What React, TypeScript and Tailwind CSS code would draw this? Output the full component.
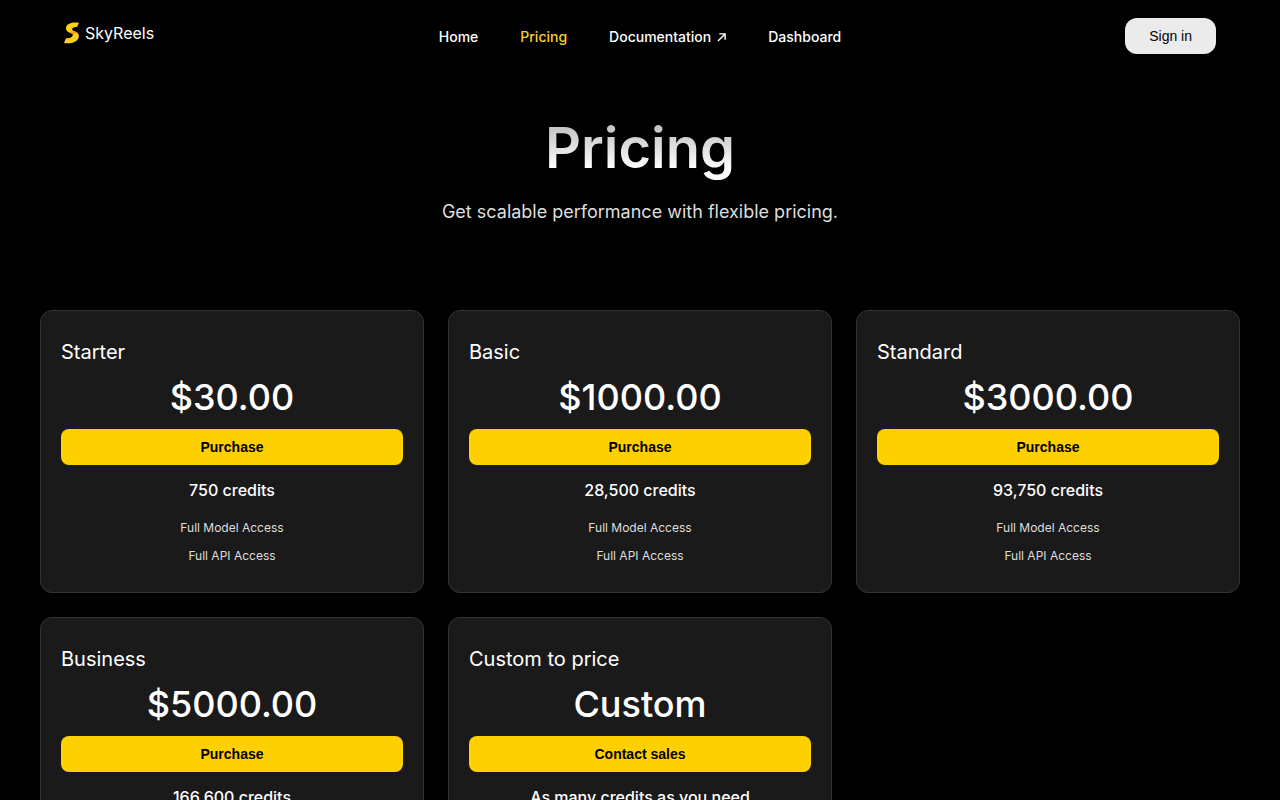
import React from "react";

interface Plan {
  name: string;
  price: string;
  action: string;
  credits: string;
}

const plans: Plan[] = [
  { name: "Starter", price: "$30.00", action: "Purchase", credits: "750 credits" },
  { name: "Basic", price: "$1000.00", action: "Purchase", credits: "28,500 credits" },
  { name: "Standard", price: "$3000.00", action: "Purchase", credits: "93,750 credits" },
  { name: "Business", price: "$5000.00", action: "Purchase", credits: "166,600 credits" },
  { name: "Custom to price", price: "Custom", action: "Contact sales", credits: "As many credits as you need" },
];

const features = ["Full Model Access", "Full API Access"];

function Logo() {
  return (
    <a href="#" className="flex items-center gap-1.5 pb-1.5 text-base text-white">
      <svg viewBox="0 0 15 22" className="h-[22px] w-[15px]" aria-hidden="true">
        <path
          d="M15 0.8C9 -0.4 3.300 1.200 2.200 5C1.200 8.800 4.200 10 7 11.200C9 12.100 9.300 13 8.300 14.300C7 16 4 16.600 2 16.200L0 20.900C7 22 13.300 20.200 14.700 15.200C15.500 11.700 13.300 10.300 10.500 9.200C8.300 8.400 7.500 7.500 8.500 6.300C9.500 5.200 11.500 4.800 13 5Z"
          fill="#ffd118"
        />
        <path d="M6 10.800C8 8.800 10 9 12 9.900C13 10.400 13.500 11 13.700 11.800C12.500 11 11 11 9.300 12.800C9 12 7.500 11.500 6 10.800Z" fill="#f79a10" />
      </svg>
      SkyReels
    </a>
  );
}

function Header() {
  return (
    <header className="grid h-[72px] grid-cols-[1fr_auto_1fr] items-center px-16">
      <Logo />
      <nav className="flex items-center gap-[42px] pt-0.5 text-sm font-medium">
        <a href="#">Home</a>
        <a href="#" className="text-[#fccf2d]">Pricing</a>
        <a href="#" className="flex items-center gap-1.5">
          Documentation
          <svg viewBox="0 0 10 10" className="h-[9px] w-[9px]" fill="none" stroke="currentColor" strokeWidth="1.6" aria-hidden="true">
            <path d="M1 9L9 1M2.500 1H9V7.500" />
          </svg>
        </a>
        <a href="#">Dashboard</a>
      </nav>
      <button className="h-9 justify-self-end rounded-xl bg-[#ebebeb] px-6 font-['Liberation_Sans',sans-serif] text-sm text-black">
        Sign in
      </button>
    </header>
  );
}

function PlanCard({ plan }: { plan: Plan }) {
  return (
    <article className="rounded-xl border border-[#333] bg-[#1a1a1a] px-5 pt-6 pb-[22px] text-center">
      <h2 className="text-left text-xl leading-[34px]">{plan.name}</h2>
      <p className="mt-1 text-4xl leading-[48px] font-medium">{plan.price}</p>
      <button className="mt-2 h-9 w-full rounded-lg bg-[#ffd000] font-['Liberation_Sans',sans-serif] text-sm font-bold text-black">
        {plan.action}
      </button>
      <p className="mt-[9px] text-base leading-8 font-medium">{plan.credits}</p>
      <ul className="mt-2 text-xs leading-7 text-[#dedede]">
        {features.map((feature) => (
          <li key={feature}>{feature}</li>
        ))}
      </ul>
    </article>
  );
}

export default function App() {
  return (
    <div className="min-h-screen bg-black font-[Inter,sans-serif] text-white">
      <Header />
      <main className="px-10 pt-10 pb-16">
        <section className="text-center">
          <h1 className="bg-linear-to-b from-[#b0b0b0] to-white to-80% bg-clip-text text-[56px] leading-[72px] font-semibold text-transparent">
            Pricing
          </h1>
          <p className="mt-3 text-lg leading-8 text-[#dedede]">
            Get scalable performance with flexible pricing.
          </p>
        </section>
        <section className="mt-[82px] grid grid-cols-1 gap-6 md:grid-cols-2 lg:grid-cols-3">
          {plans.map((plan) => (
            <PlanCard key={plan.name} plan={plan} />
          ))}
        </section>
      </main>
    </div>
  );
}
